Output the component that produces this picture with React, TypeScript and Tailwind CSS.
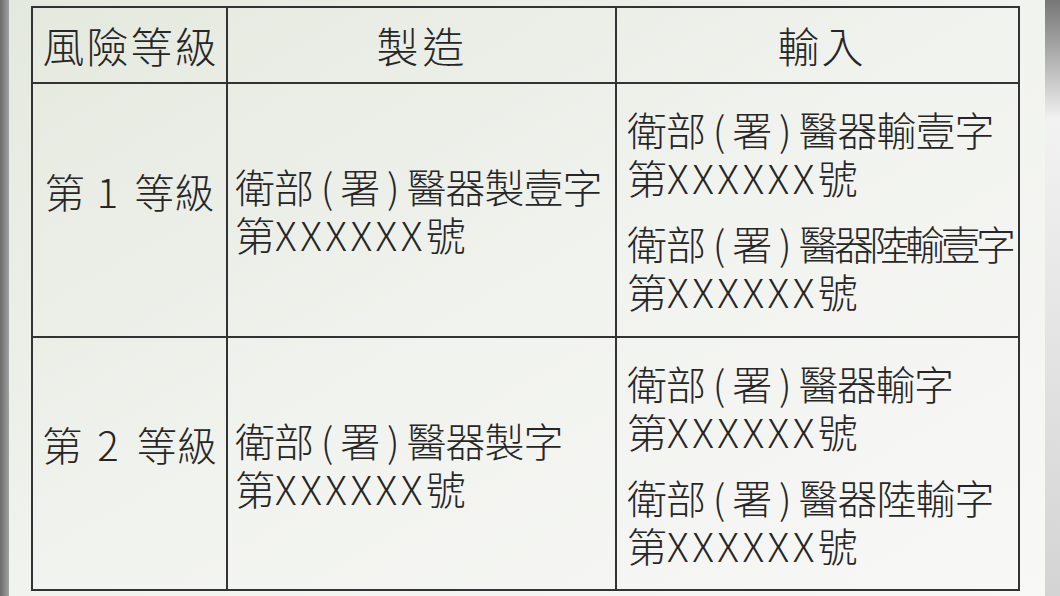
const FONT = "font-['Noto_Sans_CJK_TC','Noto_Sans',sans-serif]";

// one registration number: "衛部 ( 署 ) 醫器…字" + "第XXXXXX號"
function Entry({ tail, squeeze = 'tracking-[-1px]' }: { tail: string; squeeze?: string }) {
  return (
    <div>
      <div className="whitespace-pre">
        <span className="tracking-[-1px]">衛部 ( 署 ) </span>
        <span className={squeeze}>{tail}</span>
      </div>
      <div className="whitespace-pre">
        第<span className="tracking-[3.5px]">XXXXXX</span>號
      </div>
    </div>
  );
}

function Level({ n, a, b }: { n: string; a: string; b: string }) {
  return (
    <span className="whitespace-pre">
      第<span className={a}>{n}</span>
      <span className={b}>等級</span>
    </span>
  );
}

const cell = 'border-r-2 border-b-2 border-[#333]';

export default function App() {
  return (
    <div className={`flex w-[1060px] h-[596px] overflow-hidden ${FONT} font-light text-[#262626]`}>
      {/* left frame edge */}
      <div className="w-[9px] shrink-0 bg-linear-to-r from-[#6a6a6a] to-[#a2a2a2]" />

      {/* slide */}
      <div className="flex-1 pl-[22px] pt-[6px] bg-linear-to-br from-[#e4e9df] via-[#f1f3ee] to-[#f8f8f7]">
        <div className="grid grid-cols-[195px_389px_403px] grid-rows-[76px_254px_253px] w-[989px] border-l-2 border-t-2 border-[#333] text-[40px] leading-[48px]">
          {/* header */}
          <div className={`${cell} flex items-center justify-center text-[42px] tracking-[2px] pl-[2px]`}>風險等級</div>
          <div className={`${cell} flex items-center justify-center text-[42px] tracking-[4px] pl-[2px]`}>製造</div>
          <div className={`${cell} flex items-center justify-center text-[42px] tracking-[2px] pl-[8px]`}>輸入</div>

          {/* level 1 */}
          <div className={`${cell} flex items-center justify-center pb-[38px]`}>
            <Level n="1" a="ml-[12px]" b="ml-[16px]" />
          </div>
          <div className={`${cell} flex items-center pl-[7px]`}>
            <Entry tail="醫器製壹字" />
          </div>
          <div className={`${cell} flex flex-col justify-center gap-[18px] pl-[10px]`}>
            <Entry tail="醫器輸壹字" />
            <Entry tail="醫器陸輸壹字" squeeze="tracking-[-4.5px]" />
          </div>

          {/* level 2 */}
          <div className={`${cell} flex items-center justify-center pb-[40px]`}>
            <Level n="2" a="ml-[15px]" b="ml-[18px]" />
          </div>
          <div className={`${cell} flex items-center pl-[7px]`}>
            <Entry tail="醫器製字" />
          </div>
          <div className={`${cell} flex flex-col justify-center gap-[18px] pl-[10px]`}>
            <Entry tail="醫器輸字" squeeze="tracking-[-1.5px]" />
            <Entry tail="醫器陸輸字" />
          </div>
        </div>
      </div>

      {/* right frame edge */}
      <div className="w-[15px] shrink-0 bg-linear-to-b from-[#777] via-[#f2f2f2] via-20% to-[#d4d4d4]" />
    </div>
  );
}
